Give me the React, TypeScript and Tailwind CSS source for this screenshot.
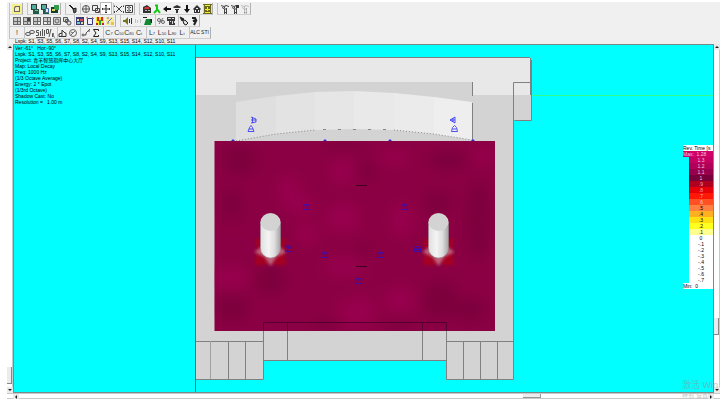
import type { ReactNode } from "react";

type Tool = {
    label: string;
    icon: ReactNode;
    active?: boolean;
};

const grid = (
    <g>
        <path fill="#c6c6c6" d="M1 2h8v7H1z" />
        <path
            fill="none"
            stroke="#666"
            d="M1.5 1v8M5.5 1v8M8.5 1v8M1 1.5h8M1 5.5h8M1 8.5h8"
        />
    </g>
);

const image = (
    <g>
        <path fill="#333" d="M1 0h6v6H1z" />
        <path fill="#4fae9c" d="M2 1h4v4H2z" />
        <path fill="#1c5c44" d="M3 5h6v5H3z" />
        <path fill="#8fb8a8" d="M5 6h3v1H5z" />
    </g>
);

const filter = (
    <path
        fill="none"
        stroke="#444"
        d="M1 1.5l3 1 2-1 3 1M2 3.5l2 1 1-2M4 5h3M4.5 5v5M6.5 4v6M4 8.5h3"
    />
);

const fileTools: Tool[] = [
    {
        label: "Project",
        icon: (
            <g>
                <path fill="#f5ee8a" d="M0 0h10v10H0z" />
                <path fill="#666" d="M3 2h5v6H2V4z" />
                <path fill="#f3edbd" d="M4 3h3v4H3V4z" />
            </g>
        ),
    },
];

const imageTools: Tool[] = [
    { label: "Open picture", icon: image },
    {
        label: "Copy picture",
        icon: (
            <g>
                {image}
                <path fill="#e7e9fb" stroke="#4468a8" d="M5.5 4.5h3v4h-3z" />
            </g>
        ),
    },
    {
        label: "Save picture",
        icon: (
            <g>
                <path fill="#173f29" d="M1 3h7v6H1z" />
                <path fill="#319e4e" d="M4 1h5v5H4z" />
                <path fill="#d7d568" d="M2 5h3v2H2z" />
            </g>
        ),
    },
];

const pickTools: Tool[] = [
    {
        label: "Pick",
        icon: (
            <g stroke="#222">
                <path d="M1 1l5 5M2 1l5 5" />
                <path fill="#666" d="M5 5l3-1v4L6 9z" />
            </g>
        ),
    },
];

const moveTools: Tool[] = [
    {
        label: "Rotate",
        icon: (
            <g fill="none" stroke="#555">
                <circle cx="5" cy="5" r="3.5" />
                <path d="M5 1v8M1 5h8" />
            </g>
        ),
    },
    {
        label: "Zoom window",
        icon: (
            <g fill="none" stroke="#444">
                <path d="M1.5 1.5h5v5h-5zM4.5 4.5h4v4h-4z" />
                <path stroke="#b55" d="M6 6l2 2" />
            </g>
        ),
    },
    {
        label: "Pan",
        active: true,
        icon: (
            <path
                fill="none"
                stroke="#333"
                d="M5 1v8M1 5h8M4 1.5h2M4 8.5h2M1.5 4v2M8.5 4v2"
            />
        ),
    },
];

const fitTools: Tool[] = [
    {
        label: "Zoom out",
        icon: (
            <path
                fill="none"
                stroke="#444"
                d="M0.5 3V1.5M9.5 1.5V3M0.5 7v2M9.5 7v2M2 2l6 6M8 2L2 8"
            />
        ),
    },
    {
        label: "Fit view",
        icon: (
            <g fill="none" stroke="#444">
                <path d="M1.5 1.5h7v7h-7z" />
                <path d="M3 3l1 1M7 3L6 4M3 7l1-1M7 7L6 6M5 2v6" />
            </g>
        ),
    },
];

const viewTools: Tool[] = [
    {
        label: "Room",
        icon: (
            <g>
                <path fill="#333" d="M1 3l4-2 4 3v5H1z" />
                <path fill="#d43a3a" d="M3 3h4v2H2z" />
                <path fill="#b7b7b7" d="M3 6h2v1H3zM6 6h2v1H6z" />
            </g>
        ),
    },
    {
        label: "Listener",
        icon: (
            <path
                fill="none"
                stroke="#16c716"
                strokeWidth="2"
                d="M3 1.5h3M5 2v4L2 9M5 5l3 4"
            />
        ),
    },
    { label: "Left", icon: <path fill="#111" d="M1 5l4-3v2h4v2H5v2z" /> },
    {
        label: "Top",
        icon: (
            <path fill="#333" d="M1 3l4-2 4 2-1 1H2zM3 5h4v1H3zM4 6h2v3H4z" />
        ),
    },
    { label: "Down", icon: <path fill="#111" d="M4 1h2v4h2L5 9 2 5h2z" /> },
    {
        label: "Home",
        icon: (
            <g>
                <path fill="#333" d="M1 5l4-4 4 4-1 1v3H2V6z" />
                <path fill="#eee" d="M4 4h2v1H4zM3 6h1v2H3zM6 6h1v2H6z" />
            </g>
        ),
    },
    {
        label: "Render",
        icon: (
            <g>
                <path fill="#6b6a1c" d="M1 0h9v10H1z" />
                <path
                    fill="none"
                    stroke="#f1ed21"
                    d="M1.5 1v8M9.5 1v8M3 1.5h5M3 8.5h5M5.5 3v4M3 5.5h5"
                />
            </g>
        ),
    },
];

const filterTools: Tool[] = [
    { label: "Filter loudspeakers", icon: filter },
    {
        label: "Filter areas",
        icon: (
            <g>
                {filter}
                <path fill="#333" d="M6 1h3v3H6z" />
            </g>
        ),
    },
    { label: "Filter off", icon: <g opacity="0.3">{filter}</g> },
];

const mapTools: Tool[] = [
    { label: "Direct map", icon: grid },
    {
        label: "Total map",
        icon: (
            <g>
                {grid}
                <path fill="#444" d="M5 2h3v3H5z" />
            </g>
        ),
    },
    {
        label: "Area map",
        icon: (
            <g>
                {grid}
                <path fill="#eee" d="M6 6h2v2H6z" />
            </g>
        ),
    },
    {
        label: "Seat map",
        icon: (
            <g>
                {grid}
                <path fill="#eee" d="M2 6h3v2H2z" />
            </g>
        ),
    },
    {
        label: "Room map",
        icon: (
            <g fill="#ccc" stroke="#666">
                <path d="M1.5 1.5h7v7h-7z" />
                <circle cx="5" cy="5" r="2" />
            </g>
        ),
    },
    {
        label: "Layers",
        icon: (
            <g fill="#ddd" stroke="#555">
                <path d="M1.5 1.5h4v4h-4zM3.5 3.5h3v3h-3z" />
                <circle cx="7" cy="7" r="2" />
            </g>
        ),
    },
];

const colorTools: Tool[] = [
    {
        label: "Mapping",
        icon: (
            <g>
                <path fill="#3c3c70" d="M1 1h8v8H1z" />
                <path fill="#d6e5a0" d="M2 3h2v2H2zM6 6h2v2H6z" />
                <path fill="#d14b6b" d="M5 3h3v2H5z" />
                <path fill="#5fd0c8" d="M2 6h3v2H2z" />
            </g>
        ),
    },
    {
        label: "Contour",
        icon: (
            <g fill="#eef">
                <path stroke="#3b3b7d" d="M2.5 2.5h5v6h-5z" />
                <path stroke="#b66" d="M1 2l2-1M7 1l2 2" />
            </g>
        ),
    },
    {
        label: "Colour scale",
        icon: (
            <g>
                <path fill="#f4e72a" d="M1 1h8v8H1z" />
                <path fill="#d32a1c" d="M2 1h2v4H2zM6 1h2v4H6z" />
                <path fill="#2b9a46" d="M4 4h2v5H4z" />
                <path fill="#b5262a" d="M1 7h2v2H1zM7 7h2v2H7z" />
            </g>
        ),
    },
    {
        label: "Notes",
        icon: (
            <g>
                <path fill="#f6eca0" d="M1 1h8v8H1z" />
                <path fill="none" stroke="#6c6cc4" d="M3 8V6l4-4M2 2h2" />
                <path fill="#e9c83b" d="M6 6h3v3H6z" />
            </g>
        ),
    },
];

const auraTools: Tool[] = [
    {
        label: "Sound",
        icon: (
            <g>
                <path fill="#76761f" d="M0 4h2l3-3v8L2 6H0z" />
                <path fill="none" stroke="#333" d="M6.5 3v4M8.5 2v6" />
            </g>
        ),
    },
    {
        label: "Mute",
        icon: (
            <path fill="none" stroke="#c4c4c4" d="M2.5 3v4M4.5 4v3M7.5 3v4" />
        ),
    },
    {
        label: "Surface",
        icon: (
            <g>
                <path fill="#118a31" d="M1 9l2-6h6L8 9z" />
                <path fill="#222" d="M0 1h4v1H0zM7 3h2v4H8z" />
            </g>
        ),
    },
];

const rayTools: Tool[] = [
    {
        label: "Rays",
        icon: (
            <g fill="none" stroke="#666">
                <circle cx="3" cy="4" r="1.5" />
                <circle cx="7" cy="6" r="1.5" />
                <path d="M3 8l4-6" />
            </g>
        ),
    },
    {
        label: "Table",
        icon: (
            <g>
                <path fill="#3a3a3a" d="M1 1h8v8H3V5H1z" />
                <path
                    fill="#d8d8d8"
                    d="M2 2h3v1H2zM6 2h2v1H6zM4 5h1v1H4zM6 5h1v3H6zM8 5h1v2H8z"
                />
            </g>
        ),
    },
];

const helpTools: Tool[] = [
    {
        label: "Point",
        icon: (
            <g stroke="#222">
                <path fill="#222" d="M1 1l4 2-2 2z" />
                <path fill="#ddd" d="M4 5l2-1 3 3-2 2-2-1z" />
            </g>
        ),
    },
    {
        label: "Help",
        icon: (
            <path
                fill="none"
                stroke="#222"
                strokeWidth="2"
                d="M3 2h3l1 2-3 1h3L5 9"
            />
        ),
    },
];

const text = (main: string, sub?: string) => (
    <span className="flex items-end text-[7px] leading-[7px] text-[#333]">
        {main}
        {sub && <span className="text-[4px] leading-[4px]">{sub}</span>}
    </span>
);

const calcTools: Tool[][] = [
    [{ label: "Calculate", icon: text("!") }],
    [
        {
            label: "Link",
            icon: (
                <g fill="none" stroke="#555">
                    <ellipse cx="3" cy="6" rx="2.5" ry="1.5" />
                    <ellipse cx="7" cy="4" rx="2.5" ry="1.5" />
                </g>
            ),
        },
        {
            label: "Spectrum",
            icon: (
                <path
                    fill="none"
                    stroke="#555"
                    d="M4 2.5H1.5v2h2v3H1M5.5 3v5M7.5 1v7M9.5 2v6M1 9.5h9"
                />
            ),
        },
        {
            label: "Direct to reverberant",
            icon: (
                <path
                    fill="none"
                    stroke="#555"
                    d="M1.5 1.5v4h2v-4zM6 1L4 9M7.5 9V5.5h1v1h-1l2 3"
                />
            ),
        },
    ],
    [
        {
            label: "Arrival",
            icon: (
                <path
                    fill="none"
                    stroke="#333"
                    d="M1 8.5V6l3-1V2l3 3h1v3.5zM4 5v3"
                />
            ),
        },
        {
            label: "Clock",
            icon: (
                <g fill="none" stroke="#666">
                    <circle cx="5" cy="5" r="3.5" />
                    <path d="M3 7l4-4M5 5L3 4" />
                </g>
            ),
        },
    ],
    [
        {
            label: "Path",
            icon: (
                <g fill="none" stroke="#555">
                    <circle cx="2" cy="7" r="1" />
                    <path d="M3 7h2V5l4-4M7 3h2" />
                </g>
            ),
        },
        {
            label: "Sum",
            icon: (
                <path
                    fill="none"
                    stroke="#222"
                    d="M7.5 3V1.5H2.5L5 5 2.5 8.5h5V7"
                />
            ),
        },
    ],
    [
        { label: "C7", icon: text("C", "7") },
        { label: "C50", icon: text("C", "50") },
        { label: "C80", icon: text("C", "80") },
        { label: "Ct", icon: text("C", "t") },
    ],
    [
        { label: "L7", icon: text("L", "7") },
        { label: "L50", icon: text("L", "50") },
        { label: "L80", icon: text("L", "80") },
        { label: "Lt", icon: text("L", "t") },
    ],
    [
        {
            label: "ALC",
            icon: <span className="text-[5px] text-[#222]">ALC</span>,
        },
        {
            label: "STI",
            icon: <span className="text-[5px] text-[#222]">STI</span>,
        },
    ],
];

const toolbars: Tool[][][][] = [
    [
        [fileTools],
        [imageTools],
        [pickTools, moveTools, fitTools],
        [viewTools],
        [filterTools],
    ],
    [
        [mapTools, colorTools],
        [auraTools, rayTools, helpTools],
    ],
    [calcTools],
];

const textLabels = /^(Calculate|[CL]\w{1,2}|ALC|STI)$/;

const speakers =
    "Lspk: S1, S3, S5, S6, S7, S8, S2, S4, S9, S13, S15, S14, S12, S10, S11";

const info = [
    "Ver:-61°   Hor:-90°",
    speakers,
    "Project: 青羊智慧指挥中心大厅",
    "Map: Local Decay",
    "Freq: 1000 Hz",
    "(1/3 Octave Average)",
    "Energy: 2 * Epot",
    "(1/3rd Octave)",
    "Shadow Cast: No",
    "Resolution =   1.00 m",
];

const scale = [
    { value: "1.3", color: "bg-[#c60062] text-[#f3c3dc]" },
    { value: "1.2", color: "bg-[#b00058] text-[#f3c3dc]" },
    { value: "1.1", color: "bg-[#98004c] text-[#f3c3dc]" },
    { value: "1", color: "bg-[#78003b] text-[#f3c3dc]" },
    { value: ".9", color: "bg-[#b00020] text-[#f5a0a0]" },
    { value: ".8", color: "bg-[#e80008] text-[#ffa0a0]" },
    { value: ".7", color: "bg-[#ff1808] text-[#ffb0a0]" },
    { value: ".6", color: "bg-[#ff5024] text-[#ffc8b8]" },
    { value: ".5", color: "bg-[#ff8040]" },
    { value: ".4", color: "bg-[#ffb020]" },
    { value: ".3", color: "bg-[#ffe010]" },
    { value: ".2", color: "bg-[#ffff20]" },
    { value: ".1", color: "bg-[#ffff90]" },
    { value: "0", color: "bg-white" },
    { value: "-.1", color: "bg-white" },
    { value: "-.2", color: "bg-white" },
    { value: "-.3", color: "bg-white" },
    { value: "-.4", color: "bg-white" },
    { value: "-.5", color: "bg-white" },
    { value: "-.6", color: "bg-white" },
    { value: "-.7", color: "bg-white" },
];

// x, y, rx, ry of the brighter and darker spots on the audience area
const brightSpots = [
    [289, 190, 12, 16],
    [343, 171, 14, 14],
    [394, 158, 16, 8],
    [307, 234, 12, 12],
    [343, 218, 18, 16],
    [402, 220, 12, 18],
    [345, 267, 22, 10],
    [357, 312, 20, 16],
    [230, 278, 20, 12],
    [300, 205, 16, 10],
    [400, 300, 16, 14],
    [484, 156, 12, 8],
];

const darkSpots = [
    [232, 205, 10, 16],
    [240, 160, 18, 14],
    [345, 145, 20, 5],
    [363, 251, 9, 6],
    [438, 203, 14, 12],
    [270, 280, 16, 14],
    [232, 307, 16, 14],
    [440, 300, 18, 20],
    [478, 220, 12, 40],
    [470, 310, 16, 12],
    [366, 170, 12, 8],
    [325, 325, 14, 5],
    [398, 327, 14, 5],
    [448, 160, 20, 10],
];

const floorSpeakers = [
    [306, 207],
    [404, 207],
    [288, 249],
    [417, 249],
    [324, 255],
    [380, 255],
    [358, 281],
];

const archBands = [
    { points: "236,102 276,96 276,134 236,141", fill: "#dfdfdf" },
    { points: "276,96 315,92 315,130 276,134", fill: "#e3e3e3" },
    { points: "315,92 354,91 354,129 315,130", fill: "#e6e6e6" },
    { points: "354,91 394,93 394,130 354,129", fill: "#e9e9e9" },
    { points: "394,93 434,97 434,134 394,130", fill: "#ebebeb" },
    { points: "434,97 472,102 472,140 434,134", fill: "#eeeeee" },
];

const Column = ({ x }: { x: number }) => (
    <g transform={`translate(${x} 0)`}>
        <path
            fill="#b5000f"
            opacity="0.6"
            filter="url(#glow)"
            d="M-16 239h32l-3 9 3 17H5l-5-2-5 2h-11l3-17z"
        />
        <path
            fill="#c890a4"
            opacity="0.7"
            filter="url(#glow)"
            d="M-16 252l7-5H9l7 5-10 5-6 9-6-9z"
        />
        <path
            fill="url(#column)"
            stroke="#999"
            strokeWidth="0.5"
            d="M-10 222v26a10 10 0 0 0 20 0v-26z"
        />
        <ellipse cx="0" cy="222" rx="10" ry="9" fill="#d3d3d3" />
    </g>
);

const RoomPlan = () => (
    <svg
        className="absolute inset-0 h-full w-full"
        viewBox="14 45 699 347"
        role="img"
        aria-label="Room map"
    >
        <defs>
            <linearGradient id="column">
                <stop offset="0" stopColor="#dedede" />
                <stop offset="0.4" stopColor="#f4f4f4" />
                <stop offset="0.7" stopColor="#dddddd" />
                <stop offset="1" stopColor="#a4a4a4" />
            </linearGradient>
            <filter id="blur" x="-50%" y="-50%" width="200%" height="200%">
                <feGaussianBlur stdDeviation="7" />
            </filter>
            <filter id="glow">
                <feGaussianBlur stdDeviation="1.5" />
            </filter>
            <clipPath id="audience">
                <path d="M214.5 141h280.500v190H214.5z" />
            </clipPath>
        </defs>

        <path stroke="#168088" d="M195.5 45v347" />
        <path stroke="#2060ff" d="M195.5 45v12" />
        <path stroke="#30ff90" d="M531 95.5h183" />

        <path
            fill="#d3d3d3"
            d="M196 95h335v25h-18v259h-67v-19H263v19h-67z"
        />
        <path fill="#e8e8e8" d="M196 57h334l1 3v35H196z" />
        <path fill="#d3d3d3" d="M236 82h237v59H236z" />
        {archBands.map((band) => (
            <polygon key={band.points} points={band.points} fill={band.fill} />
        ))}
        <path
            fill="none"
            stroke="#888"
            strokeDasharray="1 2"
            d="M236 141l40-7 39-4"
        />
        <path
            fill="none"
            stroke="#888"
            strokeDasharray="3 12"
            d="M323 129.5h64"
        />
        <path
            fill="none"
            stroke="#888"
            strokeDasharray="1 2"
            d="M394 130l40 4 38 6"
        />

        <g fill="none" stroke="#808080">
            <path d="M196 57.5h334M530.5 58v37M531.5 60v60.5h-17M513.5 379V82.5h17" />
            <path d="M472.5 82v14M472.5 103v38" />
            <path d="M196 341.5h67M196 379.5h67.5M228.5 341v38M245.5 341v38M263.5 323v56" />
            <path d="M446 341.5h67M513.5 379.5h-67V323M463.5 341v38M480.5 341v38M497.5 341v38" />
            <path d="M263 360.5h183M287.5 323v37M422.5 323v37" />
            <path stroke="#a0a0a0" d="M210.5 341v38" />
        </g>

        <g clipPath="url(#audience)">
            <path fill="#8b0044" d="M214 141h281v190H214z" />
            <g filter="url(#blur)" opacity="0.7">
                {brightSpots.map(([x, y, rx, ry]) => (
                    <ellipse
                        key={`${x}-${y}`}
                        cx={x}
                        cy={y}
                        rx={rx}
                        ry={ry}
                        fill="#9d0051"
                    />
                ))}
                {darkSpots.map(([x, y, rx, ry]) => (
                    <ellipse
                        key={`${x}-${y}`}
                        cx={x}
                        cy={y}
                        rx={rx}
                        ry={ry}
                        fill="#77003a"
                    />
                ))}
            </g>
            <path
                fill="none"
                stroke="#560030"
                d="M263.5 331v-8.5h183v8.5M287.5 323v8M422.5 323v8"
            />
        </g>
        <path stroke="#400020" d="M356 185.5h11M356 266.5h11" />

        <Column x={270.5} />
        <Column x={438.5} />

        <g fill="none" stroke="#2a10c0">
            {floorSpeakers.map(([x, y]) => (
                <path
                    key={`${x}-${y}`}
                    transform={`translate(${x} ${y})`}
                    strokeWidth="0.8"
                    d="M-2.5 2.5h6v-3l-1-2h-4l-1 2zM-1 1.5l1.5-3 1.5 3"
                />
            ))}
        </g>
        <g fill="none" stroke="#4040f0" strokeWidth="0.9">
            <path d="M251 117l5 2v3l-5 1M251 120h5M252.5 117v6" />
            <path d="M248 131.5h6l-1.5-4-1.5-2-1.5 2zM249 129h4" />
            <path d="M455 117l-5 3 5 3zM453 118v4M450 120h5" />
            <path d="M451.5 131.500h6l-1-4-2-2-2 2zM452.500 129h4" />
        </g>
        <path
            fill="#3030d8"
            d="M231 141l2-2 2 2zM323 141l2-2 2 2zM388 141l2-2 2 2zM471 141l2-2 2 2z"
        />
    </svg>
);

const ToolButton = ({ label, icon, active }: Tool) => (
    <button
        type="button"
        aria-label={label}
        className={`flex h-[11px] w-[10px] shrink-0 items-center justify-center whitespace-nowrap ${
            active ? "bg-white outline outline-[#b8b8b8]" : ""
        }`}
    >
        {textLabels.test(label) ? (
            icon
        ) : (
            <svg className="h-[10px] w-[10px]" viewBox="0 0 10 10">
                {icon}
            </svg>
        )}
    </button>
);

const Toolbar = ({ groups }: { groups: Tool[][][] }) => (
    <div className="flex h-[12px] gap-[5px] pl-[3px]">
        {groups.map((sections, i) => (
            <div
                key={i}
                className="flex h-[12px] gap-[3px] border-r border-b border-r-[#b0b0b0] border-b-[#cfcfcf] pl-[2px] shadow-[-1px_0_0_#c4c4c4]"
            >
                {sections.map((tools, j) => (
                    <div
                        key={j}
                        className={`flex ${j > 0 ? "shadow-[-1px_0_0_#c4c4c4]" : ""}`}
                    >
                        {tools.map((tool) => (
                            <ToolButton key={tool.label} {...tool} />
                        ))}
                    </div>
                ))}
            </div>
        ))}
    </div>
);

const Arrow = ({ label, d }: { label: string; d: string }) => (
    <button
        type="button"
        aria-label={label}
        className="flex h-[6px] w-[6px] shrink-0 items-center justify-center bg-[#e9e9e9]"
    >
        <svg className="h-[4px] w-[4px]" viewBox="0 0 4 4">
            <path fill="#222" d={d} />
        </svg>
    </button>
);

const VerticalScroll = ({ side }: { side: "left" | "right" }) => (
    <div className="flex w-[6px] shrink-0 flex-col border-r border-[#c8c8c8] bg-white">
        <Arrow label={`Scroll ${side} bar up`} d="M0 3l2-2 2 2z" />
        <div className={side === "left" ? "grow-[94]" : "grow-[78]"} />
        <div className="h-[17px] border-r border-b border-[#888] bg-[#ebebeb]" />
        <div className={side === "left" ? "grow-[1]" : "grow-[15]"} />
        <Arrow label={`Scroll ${side} bar down`} d="M0 1h4L2 3z" />
    </div>
);

const Legend = () => (
    <div className="absolute top-[100px] right-0 w-[30px] text-[5px] leading-[6px] whitespace-nowrap">
        <div className="bg-white">Rev. Time [s</div>
        <div className="bg-[#d0006a] text-[#f3c3dc]">Max:&nbsp; 1.28</div>
        <ul className="ml-[6px] text-center">
            {scale.map(({ value, color }) => (
                <li key={value} className={color}>
                    {value}
                </li>
            ))}
        </ul>
        <div className="bg-white">Min:&nbsp; 0</div>
    </div>
);

export default function App() {
    return (
        <div className="h-screen bg-white pt-[2px] pr-[5px] pb-[5px] pl-[7px] font-['Liberation_Sans','Noto_Sans_CJK_SC',sans-serif] text-black">
            <div className="relative flex h-full flex-col overflow-hidden bg-[#f0f0f0]">
                <header className="shrink-0 pt-px">
                    {toolbars.map((groups, i) => (
                        <Toolbar key={i} groups={groups} />
                    ))}
                    <p className="pl-[8px] text-[5px] leading-[5px] whitespace-nowrap">
                        {speakers}
                    </p>
                </header>
                <div className="flex min-h-0 flex-1">
                    <VerticalScroll side="left" />
                    <main className="relative min-w-0 flex-1 overflow-hidden border border-[#7a8a8a] bg-[#00ffff]">
                        <RoomPlan />
                        <div className="relative pl-px text-[5px] leading-[6px] whitespace-pre">
                            {info.map((line) => (
                                <p key={line} className="h-[6px]">
                                    {line}
                                </p>
                            ))}
                        </div>
                        <Legend />
                    </main>
                    <VerticalScroll side="right" />
                </div>
                <div className="flex h-[6px] shrink-0 border-y border-[#c8c8c8] bg-white pl-[6px]">
                    <Arrow label="Scroll left" d="M3 0v4L1 2z" />
                    <div className="grow-[502]" />
                    <div className="w-[18px] border-r border-b border-[#999] bg-[#ececec]" />
                    <div className="grow-[166]" />
                    <Arrow label="Scroll right" d="M1 0v4l2-2z" />
                    <div className="w-[6px]" />
                </div>
                <div className="absolute right-0 bottom-0 w-[38px] whitespace-nowrap text-[#8a9a9a]/60">
                    <p className="text-[9px] leading-[12px]">激活 Win</p>
                    <p className="text-[6px] leading-[8px]">转到“设置”</p>
                </div>
            </div>
        </div>
    );
}
